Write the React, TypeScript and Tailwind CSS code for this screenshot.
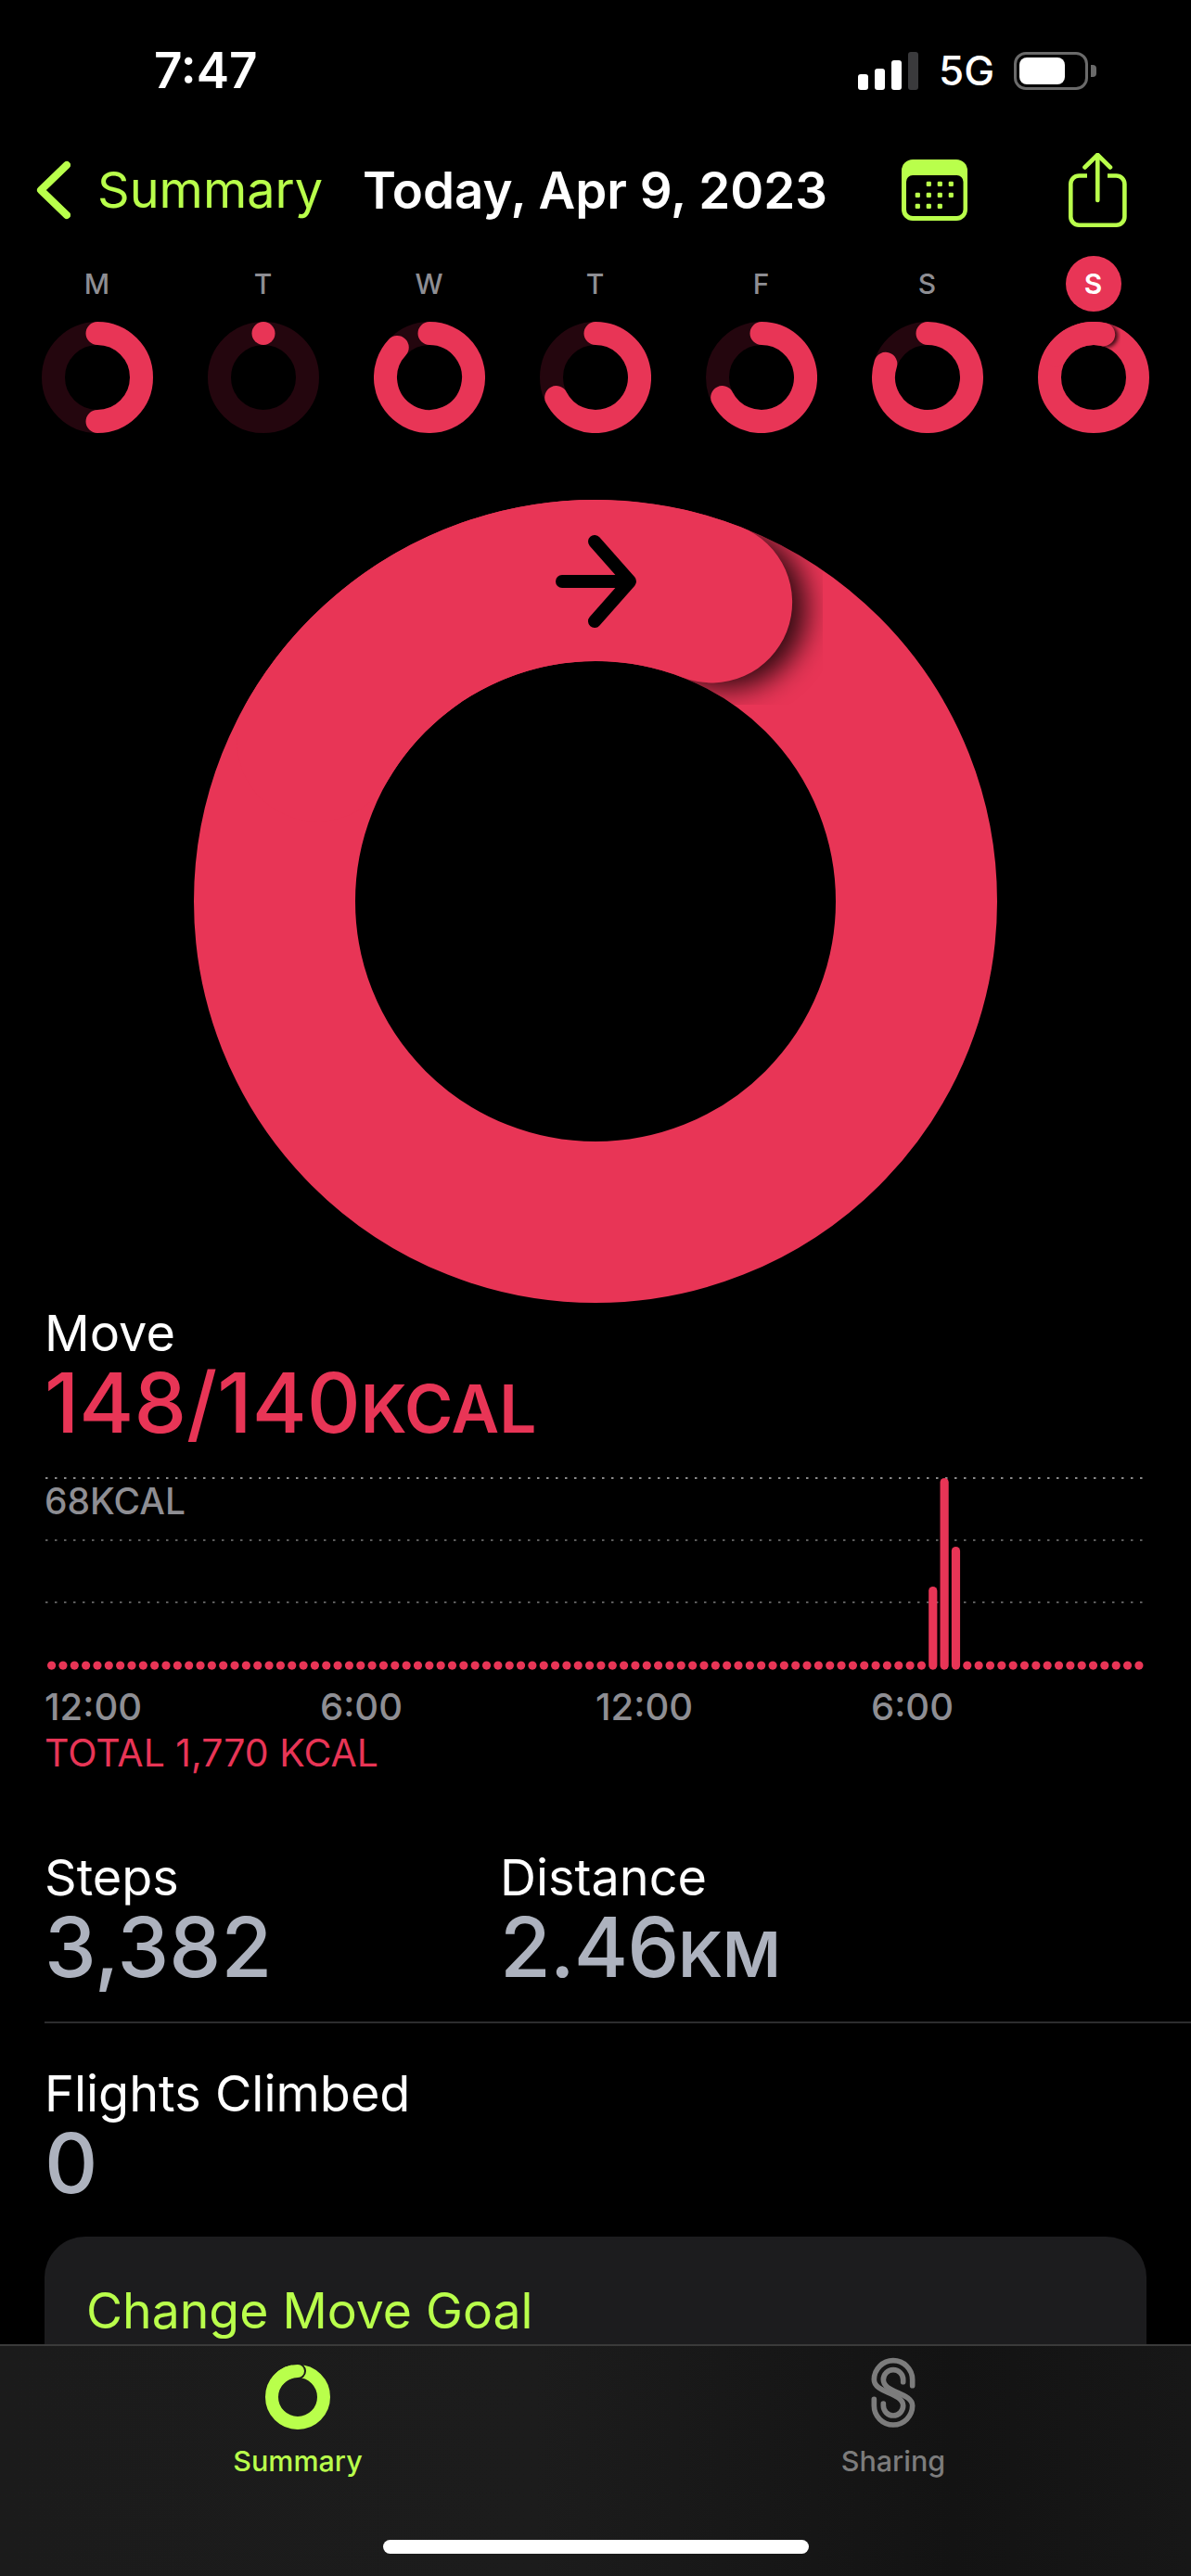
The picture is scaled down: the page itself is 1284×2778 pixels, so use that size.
import React from 'react';

const RED = '#e83556';
const LIME = '#b9ff4b';

// point on a circle, 0deg at 12 o'clock going clockwise
const pt = (c: number, r: number, deg: number) => {
  const a = (deg * Math.PI) / 180;
  return [c + r * Math.sin(a), c - r * Math.cos(a)];
};

const arc = (c: number, r: number, from: number, to: number) => {
  const [x1, y1] = pt(c, r, from);
  const [x2, y2] = pt(c, r, to);
  const large = to - from > 180 ? 1 : 0;
  return `M${x1} ${y1} A${r} ${r} 0 ${large} 1 ${x2} ${y2}`;
};

const MiniRing = ({ deg }: { deg: number }) => {
  const c = 60;
  const r = 47.5;
  return (
    <svg width="120" height="120" viewBox="0 0 120 120">
      <circle cx={c} cy={c} r={r} fill="none" stroke="#24060e" strokeWidth="25" />
      {deg === 0 ? (
        <circle cx={c} cy={c - r} r="12.5" fill={RED} />
      ) : (
        <path d={arc(c, r, 0, deg)} fill="none" stroke={RED} strokeWidth="25" strokeLinecap="round" />
      )}
    </svg>
  );
};

const MiniRingDone = () => {
  const c = 60;
  const r = 47.5;
  const [sx, sy] = pt(c, r, 15);
  return (
    <svg width="120" height="120" viewBox="0 0 120 120">
      <defs>
        <filter id="miniBlur" x="-50%" y="-50%" width="200%" height="200%">
          <feGaussianBlur stdDeviation="2" />
        </filter>
        <mask id="miniMask">
          <circle cx={c} cy={c} r={r} fill="none" stroke="#fff" strokeWidth="25" />
        </mask>
      </defs>
      <circle cx={c} cy={c} r={r} fill="none" stroke={RED} strokeWidth="25" />
      <g mask="url(#miniMask)">
        <circle cx={sx + 1.5} cy={sy + 1} r="12.5" fill="#000" fillOpacity="0.75" filter="url(#miniBlur)" />
      </g>
      <path d={arc(c, r, -60, 13)} fill="none" stroke={RED} strokeWidth="25" strokeLinecap="round" />
    </svg>
  );
};

const BigRing = () => {
  const c = 434;
  const r = 346;
  const [sx, sy] = pt(c, r, 24);
  return (
    <svg width="868" height="868" viewBox="0 0 868 868" className="mx-auto">
      <defs>
        <filter id="bigBlur" x="-60%" y="-60%" width="220%" height="220%">
          <feGaussianBlur stdDeviation="15" />
        </filter>
        <mask id="bigMask">
          <circle cx={c} cy={c} r={r} fill="none" stroke="#fff" strokeWidth="174" />
        </mask>
      </defs>
      <circle cx={c} cy={c} r={r} fill="none" stroke={RED} strokeWidth="174" />
      <g mask="url(#bigMask)">
        <circle cx={sx} cy={sy} r="87" fill="#000" fillOpacity="0.8" filter="url(#bigBlur)" />
      </g>
      <path d={arc(c, r, -60, 21.2)} fill="none" stroke={RED} strokeWidth="174" strokeLinecap="round" />
      <g transform="translate(-208 -538)" fill="none" stroke="#000" strokeWidth="14" strokeLinecap="round" strokeLinejoin="round">
        <path d="M606 627 H678" />
        <path d="M641 584 L679 627 L641 670" />
      </g>
    </svg>
  );
};

const MoveChart = () => {
  const tall: Record<number, number> = { 77: 1711, 78: 1594, 79: 1668 };
  return (
    <svg width="1284" height="215" viewBox="0 1590 1284 215">
      <line x1="49" x2="1232" y1="1594" y2="1594" stroke="#8a8a8a" strokeWidth="2" strokeDasharray="2.5 7.5" />
      <line x1="49" x2="1232" y1="1661" y2="1661" stroke="#5c5c5c" strokeWidth="2" strokeDasharray="2.5 7.5" />
      <line x1="49" x2="1232" y1="1728" y2="1728" stroke="#5c5c5c" strokeWidth="2" strokeDasharray="2.5 7.5" />
      {Array.from({ length: 96 }).map((_, i) => {
        const top = tall[i] ?? 1791.5;
        return (
          <rect key={i} x={55.6 + i * 12.34 - 4.6} y={top} width="9.2" height={1800.7 - top} rx="4.6" fill={RED} />
        );
      })}
    </svg>
  );
};

const CalendarIcon = () => (
  <svg width="71" height="66" viewBox="0 0 71 66">
    <rect width="71" height="66" rx="12" fill={LIME} />
    <rect x="5" y="17" width="61.5" height="44" rx="7" fill="#000" />
    {[
      [29.3, 26.3], [41.3, 26.3], [53.3, 26.3],
      [17.3, 38.3], [29.3, 38.3], [41.3, 38.3], [53.3, 38.3],
      [17.3, 50.3], [29.3, 50.3], [41.3, 50.3],
    ].map(([x, y]) => (
      <rect key={`${x}-${y}`} x={x - 2.6} y={y - 2.6} width="5.2" height="5.2" rx="1.2" fill={LIME} />
    ))}
  </svg>
);

const ShareIcon = () => (
  <svg width="63" height="80" viewBox="0 0 63 80" fill="none" stroke={LIME} strokeWidth="4.6" strokeLinecap="round" strokeLinejoin="round">
    <path d="M20 24.5 H11.3 a9 9 0 0 0 -9 9 V68.7 a9 9 0 0 0 9 9 H51.4 a9 9 0 0 0 9 -9 V33.5 a9 9 0 0 0 -9 -9 H42" strokeLinecap="butt" />
    <path d="M31.3 2.5 V51" />
    <path d="M17.5 15.5 L31.3 2 L45 15.5" />
  </svg>
);

const SummaryTabIcon = () => {
  const c = 36;
  const r = 28;
  const [ex, ey] = pt(c, r, 0);
  return (
    <svg width="72" height="72" viewBox="0 0 72 72">
      <circle cx={c} cy={c} r={r} fill="none" stroke={LIME} strokeWidth="14" />
      <circle cx={ex} cy={ey} r="9" fill="#1b1b1b" />
      <path d={arc(c, r, -50, 0)} fill="none" stroke={LIME} strokeWidth="14" strokeLinecap="round" />
    </svg>
  );
};

// two strands swapping between the outer and inner track
const SharingTabIcon = () => (
  <svg width="85" height="100" viewBox="0 0 255 300" fill="none" stroke="#7c7c7c" strokeWidth="17" strokeLinecap="round">
    <path d="M188 128 V109 A62 62 0 0 0 64 109 C64 152 158 150 158 193 A32 32 0 0 1 94 193 V186" />
    <path d="M158 116 V109 A32 32 0 0 0 94 109 C94 152 188 150 188 193 A62 62 0 0 1 64 193 V172" />
  </svg>
);

const days = [
  { label: 'M', deg: 180 },
  { label: 'T', deg: 0 },
  { label: 'W', deg: 313 },
  { label: 'T', deg: 243 },
  { label: 'F', deg: 243 },
  { label: 'S', deg: 288 },
];

const Stat = ({ label, value, unit }: { label: string; value: string; unit?: string }) => (
  <div>
    <div className="text-[54px] leading-[60px] text-white">{label}</div>
    <div className="flex items-baseline h-[90px] text-[#adb2be] font-medium">
      <span className={unit ? 'text-[89px] leading-[90px] tracking-[-1px]' : 'text-[89px] leading-[90px]'}>{value}</span>
      {unit && <span className="text-[68px] leading-[90px] font-semibold">{unit}</span>}
    </div>
  </div>
);

export default function App() {
  return (
    <div className="relative w-[1284px] h-[2778px] overflow-hidden bg-black font-['Inter',sans-serif]">
      {/* status bar */}
      <div className="flex items-center h-[60px] mt-[46px] pt-0">
        <div className="ml-[166px] w-[112px] text-[53px] leading-[60px] font-semibold text-white">7:47</div>
        <div className="ml-[647px] flex items-end h-[41px] gap-[7px]">
          <div className="w-[11px] h-[17px] rounded-[3px] bg-white" />
          <div className="w-[11px] h-[23px] rounded-[3px] bg-white" />
          <div className="w-[11px] h-[32px] rounded-[3px] bg-white" />
          <div className="w-[11px] h-[41px] rounded-[3px] bg-[#3a3a3c]" />
        </div>
        <div className="ml-[22px] w-[59px] text-[44px] leading-[60px] font-medium text-white">5G</div>
        <div className="ml-[22px] w-[80px] h-[41px] rounded-[13px] border-[3px] border-[#6a6a6a] p-[3px]">
          <div className="w-[49px] h-full rounded-[8px] bg-white" />
        </div>
        <div className="ml-[3px] w-[6px] h-[13px] rounded-r-[4px] bg-[#6a6a6a]" />
      </div>

      {/* nav */}
      <div className="flex items-center h-[80px] mt-[59px]">
        <svg width="37" height="64" viewBox="0 0 37 64" className="ml-[39px]" fill="none" stroke={LIME} strokeWidth="8" strokeLinecap="round" strokeLinejoin="round">
          <path d="M33 5 L5 32 L33 59" />
        </svg>
        <div className="ml-[29px] w-[286px] text-[54px] leading-[80px] text-[#b9ff4b]">Summary</div>
        <div className="w-[499px] text-[54.6px] leading-[80px] font-semibold text-white whitespace-nowrap text-center">Today, Apr 9, 2023</div>
        <div className="ml-[82px] w-[71px]"><CalendarIcon /></div>
        <div className="ml-[109px] w-[63px]"><ShareIcon /></div>
      </div>

      {/* week */}
      <div className="flex pl-[15px] mt-[31px]">
        {days.map((d, i) => (
          <div key={i} className="w-[179px] flex flex-col items-center">
            <div className="h-[60px] text-[30px] leading-[60px] font-medium text-[#8e8e93]">{d.label}</div>
            <div className="mt-[11px] h-[120px]"><MiniRing deg={d.deg} /></div>
          </div>
        ))}
        <div className="w-[179px] flex flex-col items-center">
          <div className="w-[60px] h-[60px] rounded-full bg-[#e83556] text-[30px] leading-[60px] font-semibold text-white text-center">S</div>
          <div className="mt-[11px] h-[120px]"><MiniRingDone /></div>
        </div>
      </div>

      {/* main ring */}
      <div className="mt-[71px] h-[868px]"><BigRing /></div>

      {/* move */}
      <div className="pl-[48px] mt-[2px] text-[54px] leading-[60px] text-white">Move</div>
      <div className="pl-[48px] flex items-baseline h-[90px] font-medium text-[#e83556]">
        <span className="text-[90px] leading-[90px]">148/140</span>
        <span className="text-[71px] leading-[90px] font-semibold">KCAL</span>
      </div>

      <div className="relative mt-[32px] h-[215px]">
        <MoveChart />
        <div className="absolute left-[48px] top-[7px] text-[39px] leading-[44px] font-medium text-[#8e8e93]">68KCAL</div>
      </div>

      <div className="grid grid-cols-[297px_297px_297px_297px] pl-[48px] mt-[14px] text-[40px] leading-[44px] font-medium text-[#8e8e93]">
        <div>12:00</div>
        <div>6:00</div>
        <div>12:00</div>
        <div>6:00</div>
      </div>
      <div className="pl-[48px] mt-[5px] text-[41px] leading-[44px] text-[#e83556]">TOTAL 1,770 KCAL</div>

      {/* stats */}
      <div className="flex pl-[48px] mt-[83px]">
        <div className="w-[491px]"><Stat label="Steps" value="3,382" /></div>
        <Stat label="Distance" value="2.46" unit="KM" />
      </div>
      <div className="ml-[48px] mt-[35px] h-[2px] bg-[#2c2c2e]" />
      <div className="pl-[48px] mt-[46px]"><Stat label="Flights Climbed" value="0" /></div>

      {/* goal card */}
      <div className="mx-[48px] mt-[34px] h-[200px] rounded-[44px] bg-[#1c1c1e] pl-[45px] pt-[50px]">
        <div className="text-[53.5px] leading-[60px] text-[#b9ff4b]">Change Move Goal</div>
      </div>

      {/* tab bar */}
      <div className="absolute left-0 right-0 bottom-0 h-[250px] border-t-2 border-[#3a3a3a] bg-[linear-gradient(90deg,#1b1b1b_0%,#1c1c1c_45%,#131313_80%,#171717_100%)]">
        <div className="flex">
          <div className="w-[642px] flex flex-col items-center">
            <div className="mt-[19px] h-[72px]"><SummaryTabIcon /></div>
            <div className="mt-[13px] text-[30.5px] leading-[40px] font-medium text-[#b9ff4b]">Summary</div>
          </div>
          <div className="w-[642px] flex flex-col items-center">
            <div className="h-[91px]"><SharingTabIcon /></div>
            <div className="mt-[13px] text-[30.5px] leading-[40px] font-medium text-[#7c7c7c]">Sharing</div>
          </div>
        </div>
      </div>
      <div className="absolute left-[413px] top-[2739px] w-[459px] h-[15px] rounded-full bg-white" />
    </div>
  );
}
